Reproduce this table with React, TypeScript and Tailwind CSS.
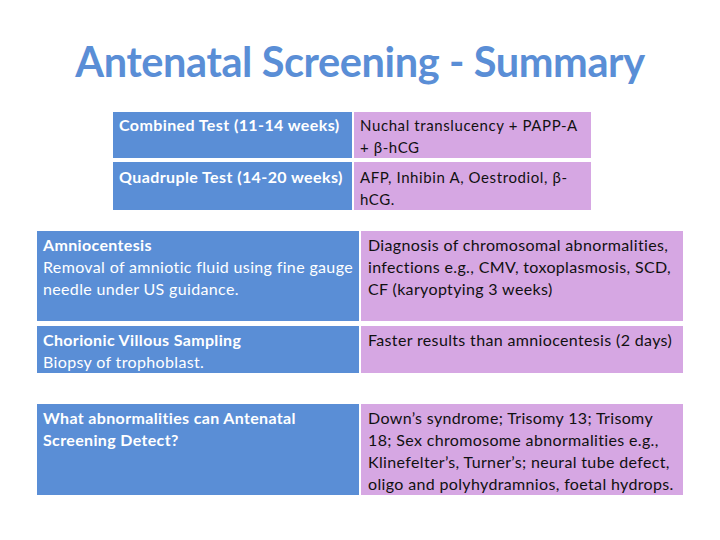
import React from "react";

const blue = "bg-[#5a8ed6]";
const purple = "bg-[#d6a7e3]";

export default function App() {
  return (
    <div
      className="w-[720px] h-[540px] bg-white flex flex-col overflow-hidden"
      style={{ fontFamily: "Lato, 'Open Sans', sans-serif" }}
    >
      <h1 className="mt-[34px] h-[54px] text-center text-[41.5px] leading-[54px] font-bold text-[#5a8ed6] tracking-[-0.4px]">
        Antenatal Screening - Summary
      </h1>

      <div className="ml-[113px] mt-[24px] w-[478px] grid grid-cols-[239px_237px] gap-x-[2px] gap-y-[4px] text-[15px] leading-[22px] whitespace-nowrap">
        <div className={`${blue} h-[46px] pl-[6px] pt-[2px] font-bold text-[16px] tracking-[0.4px] text-white`}>
          Combined Test (11-14 weeks)
        </div>
        <div className={`${purple} h-[46px] pl-[6px] pt-[2px] tracking-[0.6px] text-[#111]`}>
          Nuchal translucency + PAPP-A
          <br />+ β-hCG
        </div>
        <div className={`${blue} h-[48px] pl-[6px] pt-[4px] font-bold text-[16px] tracking-[0.4px] text-white`}>
          Quadruple Test (14-20 weeks)
        </div>
        <div className={`${purple} h-[48px] pl-[6px] pt-[4px] tracking-[0.6px] text-[#111]`}>
          AFP, Inhibin A, Oestrodiol, β-
          <br />
          hCG.
        </div>
      </div>

      <div className="ml-[37px] mt-[21px] w-[646px] grid grid-cols-[322px_322px] gap-x-[2px] text-[16px] leading-[22px] tracking-[0.35px] whitespace-nowrap">
        <div className={`${blue} h-[90px] pl-[6px] pt-[3px] text-white`}>
          <div className="font-bold">Amniocentesis</div>
          <div>
            Removal of amniotic fluid using fine gauge
            <br />
            needle under US guidance.
          </div>
        </div>
        <div className={`${purple} h-[90px] pl-[7px] pt-[3px] text-[#111]`}>
          Diagnosis of chromosomal abnormalities,
          <br />
          infections e.g., CMV, toxoplasmosis, SCD,
          <br />
          CF (karyoptying 3 weeks)
        </div>

        <div className={`${blue} mt-[5px] h-[47px] pl-[6px] pt-[3px] text-white`}>
          <div className="font-bold">Chorionic Villous Sampling</div>
          <div>Biopsy of trophoblast.</div>
        </div>
        <div className={`${purple} mt-[5px] h-[47px] pl-[7px] pt-[3px] text-[#111]`}>
          Faster results than amniocentesis (2 days)
        </div>

        <div className={`${blue} mt-[31px] h-[91px] pl-[6px] pt-[3px] font-bold text-white`}>
          What abnormalities can Antenatal
          <br />
          Screening Detect?
        </div>
        <div className={`${purple} mt-[31px] h-[91px] pl-[7px] pt-[3px] text-[#111]`}>
          Down’s syndrome; Trisomy 13; Trisomy
          <br />
          18; Sex chromosome abnormalities e.g.,
          <br />
          Klinefelter’s, Turner’s; neural tube defect,
          <br />
          oligo and polyhydramnios, foetal hydrops.
        </div>
      </div>
    </div>
  );
}
